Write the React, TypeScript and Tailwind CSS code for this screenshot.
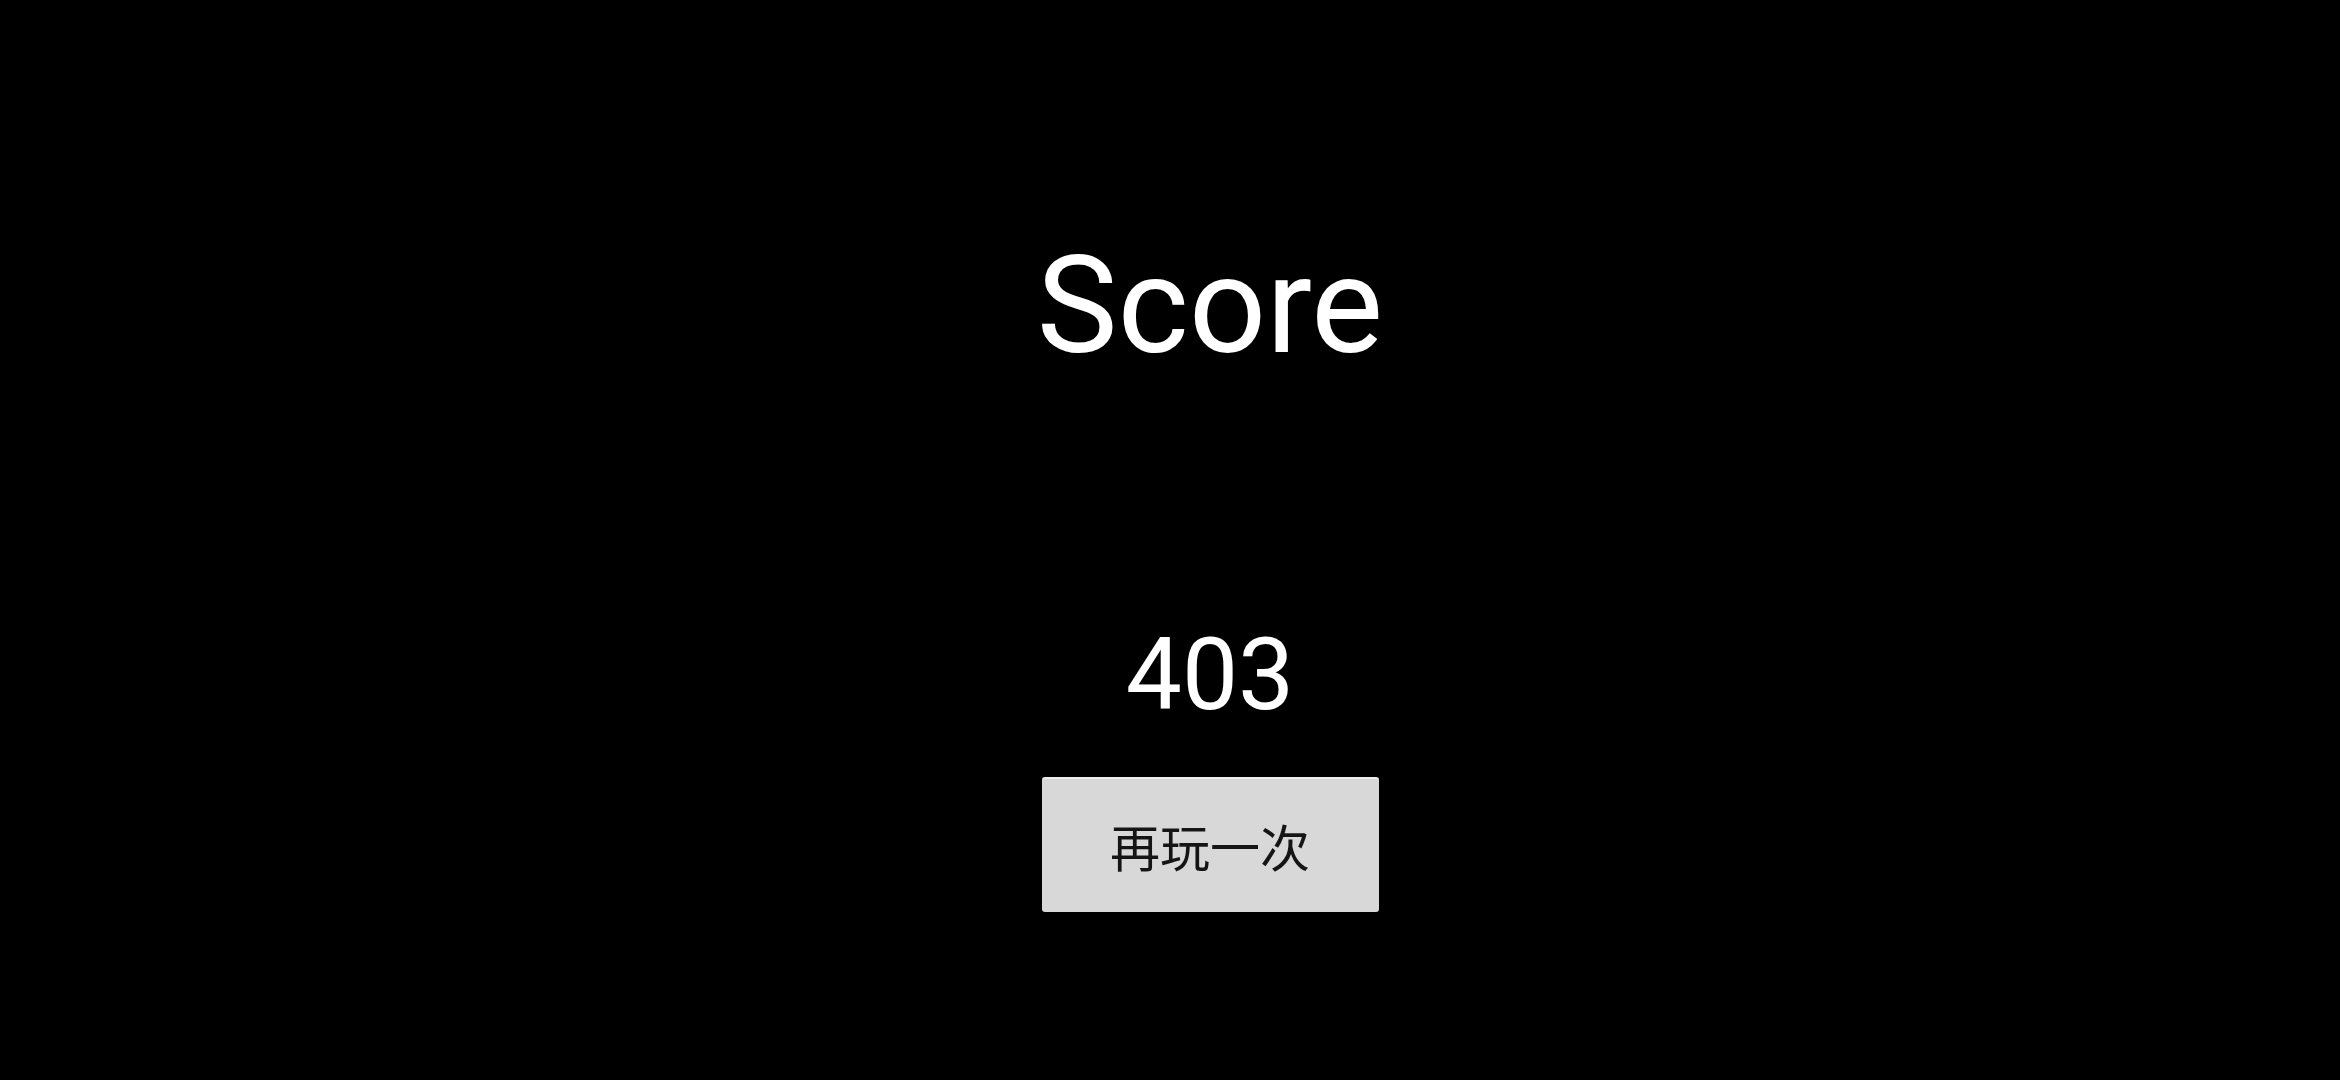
import React from "react";

export default function App() {
  const score = 403;

  return (
    <div className="w-[2340px] h-[1080px] bg-black overflow-hidden flex flex-col items-center pl-[80px] pt-[238px]">
      {/* Title */}
      <div className="text-white text-[136px] leading-none font-['Roboto',sans-serif]">
        Score
      </div>

      {/* Score value */}
      <div className="mt-[251px] text-white text-[100px] leading-none font-['Roboto',sans-serif]">
        {score}
      </div>

      {/* Replay button */}
      <button className="mt-[52px] w-[337px] h-[135px] rounded-[3px] bg-[#d8d8d8] border-t-2 border-[#ececec] flex items-center justify-center text-[#151515] text-[50px] font-['Noto_Sans_CJK_SC',sans-serif]">
        再玩一次
      </button>
    </div>
  );
}
